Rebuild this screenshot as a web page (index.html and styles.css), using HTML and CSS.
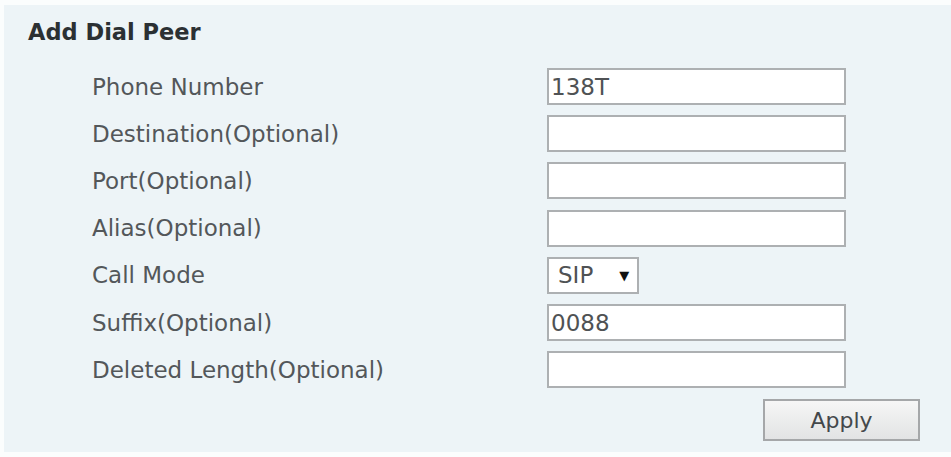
FILE: index.html
```html
<!DOCTYPE html>
<html>
<head>
<meta charset="utf-8">
<link rel="stylesheet" href="styles.css">
</head>
<body>
<div class="panel">
  <div class="title">Add Dial Peer</div>
  <div class="form">
    <div class="label">Phone Number</div>
    <div class="field"><input class="text" type="text" value="138T"></div>
    <div class="label">Destination(Optional)</div>
    <div class="field"><input class="text" type="text" value=""></div>
    <div class="label">Port(Optional)</div>
    <div class="field"><input class="text" type="text" value=""></div>
    <div class="label">Alias(Optional)</div>
    <div class="field"><input class="text" type="text" value=""></div>
    <div class="label">Call Mode</div>
    <div class="field"><div class="select"><span class="sel-val">SIP</span><span class="arrow">▼</span></div></div>
    <div class="label">Suffix(Optional)</div>
    <div class="field"><input class="text" type="text" value="0088"></div>
    <div class="label">Deleted Length(Optional)</div>
    <div class="field"><input class="text" type="text" value=""></div>
  </div>
  <div class="actions"><button class="apply" type="button">Apply</button></div>
</div>
</body>
</html>
```
FILE: styles.css
```css
html, body {
  margin: 0;
  padding: 0;
  background: #fbfdfd;
}
body {
  width: 951px;
  height: 457px;
  overflow: hidden;
  font-family: "DejaVu Sans", Verdana, sans-serif;
}
.panel {
  margin: 5px 0 0 4px;
  height: 447px;
  background: #edf4f7;
  padding-top: 13px;
  box-sizing: border-box;
}
.title {
  font-weight: bold;
  font-size: 22.5px;
  line-height: 28px;
  color: #2b3033;
  padding-left: 24px;
}
.form {
  margin-top: 17px;
  display: grid;
  grid-template-columns: 455px 1fr;
  grid-auto-rows: 47.2px;
  padding-left: 88px;
  align-items: center;
}
.label {
  font-size: 23px;
  color: #53575a;
  line-height: 28px;
}
.field {
  display: flex;
  align-items: center;
}
.text {
  width: 299px;
  height: 37px;
  box-sizing: border-box;
  border: 2px solid #adb0b2;
  background: #ffffff;
  font-family: "DejaVu Sans", Verdana, sans-serif;
  font-size: 23px;
  color: #4f5254;
  padding: 0 0 0 2px;
  margin: 0;
  outline: none;
}
.select {
  width: 92px;
  height: 37px;
  box-sizing: border-box;
  border: 2px solid #adb0b2;
  background: #ffffff;
  display: flex;
  align-items: center;
  padding-left: 9px;
}
.sel-val {
  font-size: 23px;
  color: #4f5254;
}
.arrow {
  font-size: 13px;
  color: #111;
  margin-left: 26px;
}
.actions {
  display: flex;
  justify-content: flex-end;
  padding-right: 31px;
  margin-top: 6px;
}
.apply {
  width: 157px;
  height: 42px;
  box-sizing: border-box;
  border: 2px solid #a5a7a9;
  background: linear-gradient(#f6f6f6, #e2e3e4);
  font-family: "DejaVu Sans", Verdana, sans-serif;
  font-size: 22px;
  color: #44484b;
  padding: 0;
  margin: 0;
}
```
